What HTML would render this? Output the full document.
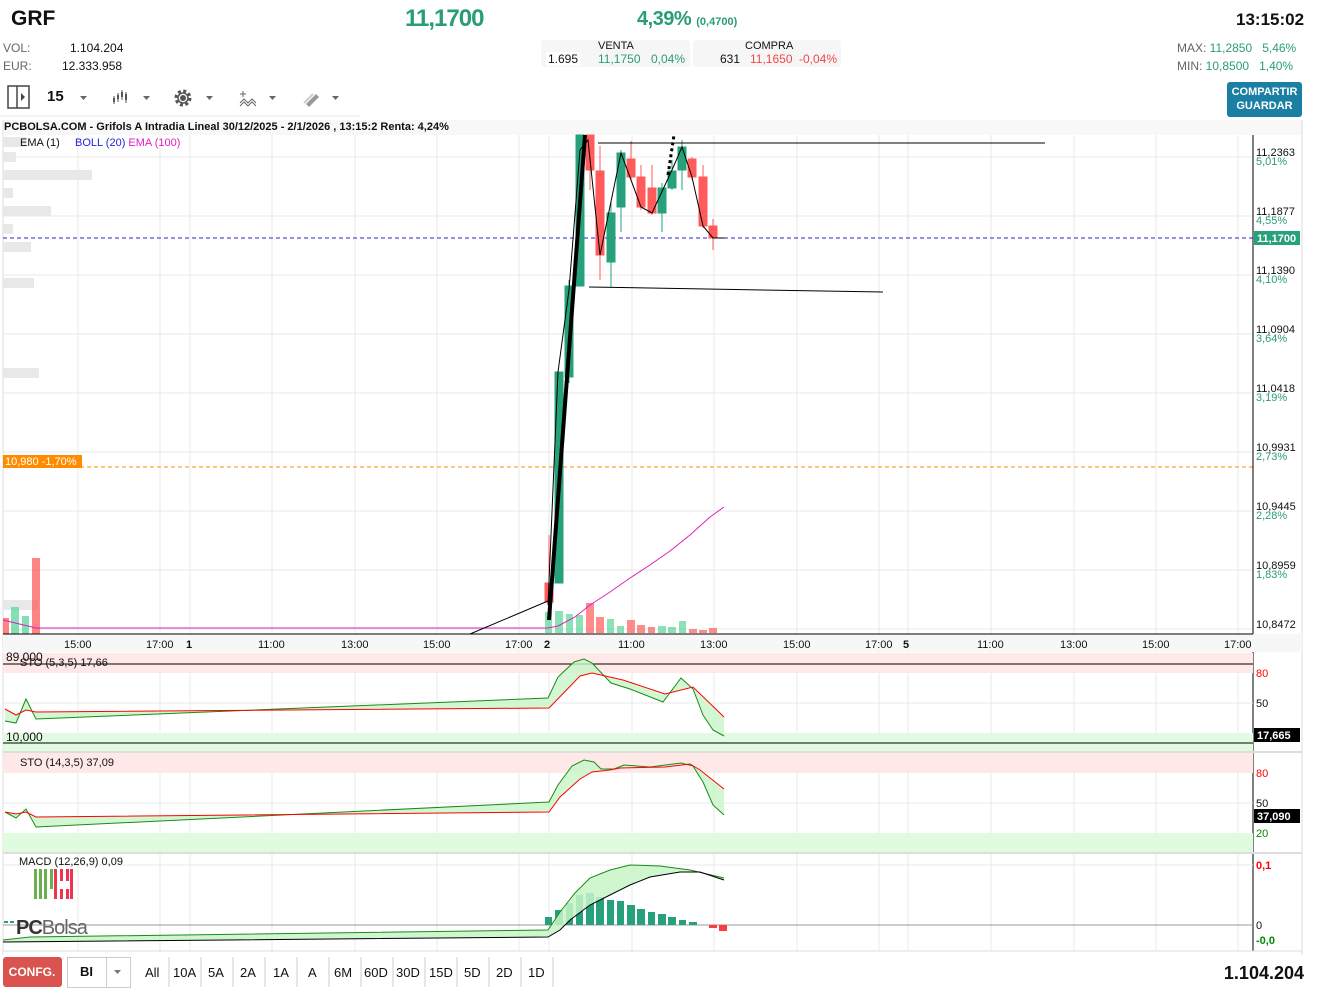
<!DOCTYPE html>
<html><head><meta charset="utf-8"><style>
*{margin:0;padding:0;box-sizing:border-box}
body{width:1317px;height:993px;background:#fff;font-family:"Liberation Sans",sans-serif;position:relative;overflow:hidden;color:#111}
.a{position:absolute;white-space:nowrap}
.g{color:#2a9d74}.r{color:#f04848}.gr{color:#666}
</style></head><body>
<div class="a" style="left:4px;top:120px;width:1298px;height:15px;background:#f8f8f8"></div>
<svg class="a" style="left:0;top:0" width="1317" height="993" font-family="Liberation Sans" font-size="11">
<!-- toolbar icons -->
<g stroke="#444" fill="none" stroke-width="1.5"><rect x="8" y="86" width="21" height="22"/><line x1="17" y1="86" x2="17" y2="108"/></g>
<path d="M21 93 L25 97 L21 101Z" fill="#444"/>
<g fill="#666"><path d="M80 96h7l-3.5 4z M143 96h7l-3.5 4z M206 96h7l-3.5 4z M269 96h7l-3.5 4z M332 96h7l-3.5 4z"/></g>
<g stroke="#555" stroke-width="1"><line x1="114" y1="96" x2="114" y2="104"/><line x1="118" y1="93" x2="118" y2="102"/><line x1="122" y1="90" x2="122" y2="100"/><line x1="126" y1="92" x2="126" y2="103"/></g>
<g fill="#555"><rect x="113" y="98" width="2" height="4"/><rect x="117" y="95" width="2" height="4"/><rect x="121" y="92" width="2" height="5"/><rect x="125" y="94" width="2" height="6"/></g>
<circle cx="183" cy="98" r="7" fill="none" stroke="#555" stroke-width="3" stroke-dasharray="3 2.5"/><circle cx="183" cy="98" r="5" fill="none" stroke="#555" stroke-width="1.5"/><circle cx="183" cy="98" r="3" fill="#555"/>
<path d="M240 94h6M243 91v6M240 103l4-4 4 4 4-4 4 4M240 106l4-4 4 4 4-4 4 4" stroke="#666" fill="none" stroke-width="1"/>
<path d="M306 104l10-10 3 3-10 10z" fill="#999"/><path d="M304 103l9-9" stroke="#ccc" stroke-width="2"/>
<line x1="0" y1="116" x2="360" y2="116" stroke="#e6e6e6"/>
<line x1="1302" y1="120" x2="1302" y2="955" stroke="#ddd"/>
<line x1="3" y1="120" x2="3" y2="955" stroke="#ddd"/>
<g stroke="#e8e8e8">
<line x1="3" y1="157" x2="1253" y2="157"/><line x1="3" y1="216" x2="1253" y2="216"/><line x1="3" y1="275" x2="1253" y2="275"/><line x1="3" y1="334" x2="1253" y2="334"/><line x1="3" y1="393" x2="1253" y2="393"/><line x1="3" y1="452" x2="1253" y2="452"/><line x1="3" y1="511" x2="1253" y2="511"/><line x1="3" y1="570" x2="1253" y2="570"/><line x1="3" y1="629" x2="1253" y2="629"/>
<path d="M78 135V951M160 135V951M190 135V951M272 135V951M355 135V951M437 135V951M519 135V951M549 135V951M632 135V951M714 135V951M797 135V951M879 135V951M908 135V951M991 135V951M1074 135V951M1156 135V951M1238 135V951"/>
</g>
<g fill="#e8e8e8"><rect x="3" y="137" width="23" height="10"/><rect x="3" y="152" width="13" height="10"/><rect x="3" y="170" width="89" height="10"/><rect x="3" y="188" width="10" height="10"/><rect x="3" y="206" width="48" height="10"/><rect x="3" y="224" width="10" height="10"/><rect x="3" y="242" width="28" height="10"/><rect x="3" y="278" width="31" height="10"/><rect x="3" y="368" width="36" height="10"/><rect x="3" y="600" width="35" height="10"/></g>
<g opacity="0.75"><rect x="3" y="618" width="6" height="16" fill="#ff5b5b"/><rect x="11" y="607" width="8" height="27" fill="#5cd69a"/><rect x="22" y="616" width="7" height="18" fill="#5cd69a"/><rect x="32" y="558" width="8" height="76" fill="#ff5b5b"/></g>
<g opacity="0.7">
<rect x="545" y="612" width="7" height="21" fill="#5cd69a"/><rect x="555" y="611" width="8" height="22" fill="#5cd69a"/><rect x="566" y="614" width="7" height="19" fill="#5cd69a"/><rect x="576" y="615" width="7" height="18" fill="#5cd69a"/><rect x="586" y="603" width="8" height="30" fill="#ff5b5b"/><rect x="596" y="617" width="8" height="16" fill="#ff5b5b"/><rect x="607" y="619" width="7" height="14" fill="#5cd69a"/><rect x="617" y="626" width="7" height="7" fill="#5cd69a"/><rect x="627" y="620" width="8" height="13" fill="#ff5b5b"/><rect x="637" y="625" width="8" height="8" fill="#ff5b5b"/><rect x="648" y="627" width="7" height="6" fill="#ff5b5b"/><rect x="658" y="626" width="8" height="7" fill="#5cd69a"/><rect x="668" y="627" width="8" height="6" fill="#5cd69a"/><rect x="679" y="621" width="7" height="12" fill="#5cd69a"/><rect x="689" y="629" width="8" height="4" fill="#ff5b5b"/><rect x="699" y="630" width="8" height="3" fill="#ff5b5b"/><rect x="709" y="628" width="8" height="5" fill="#ff5b5b"/>
</g>
<line x1="3" y1="238" x2="1253" y2="238" stroke="#2222dd" stroke-dasharray="4 3"/>
<line x1="3" y1="467" x2="1253" y2="467" stroke="#ff8c00" stroke-dasharray="4 3"/>
<rect x="3" y="455" width="79" height="13" fill="#ff8c00"/><text x="5" y="465" fill="#fff">10,980  -1,70%</text>
<path d="M3 620 L36 628 L548 628 L558 626 L575 617 L590 605 L610 592 L630 578 L650 565 L670 551 L690 535 L710 517 L724 507" stroke="#e020c0" fill="none"/>
<g stroke-width="1">
<g stroke="#ff5b5b" fill="#ff5b5b"><line x1="549" y1="535" x2="549" y2="605"/><rect x="545" y="583" width="8" height="19"/>
<line x1="590" y1="135" x2="590" y2="190"/><rect x="586" y="135" width="8" height="35"/>
<line x1="600" y1="146" x2="600" y2="280"/><rect x="596" y="171" width="8" height="84"/>
<line x1="631" y1="141" x2="631" y2="180"/><rect x="627" y="159" width="8" height="18"/>
<line x1="641" y1="165" x2="641" y2="210"/><rect x="637" y="177" width="8" height="30"/>
<line x1="652" y1="165" x2="652" y2="215"/><rect x="648" y="188" width="8" height="25"/>
<line x1="692" y1="157" x2="692" y2="180"/><rect x="688" y="159" width="8" height="18"/>
<line x1="703" y1="165" x2="703" y2="228"/><rect x="699" y="177" width="8" height="49"/>
<line x1="713" y1="219" x2="713" y2="250"/><rect x="709" y="226" width="8" height="12"/></g>
<g stroke="#26a17b" fill="#26a17b"><rect x="555" y="372" width="8" height="211"/>
<line x1="569" y1="280" x2="569" y2="383"/><rect x="565" y="286" width="8" height="91"/>
<rect x="576" y="135" width="8" height="151"/>
<line x1="611" y1="202" x2="611" y2="287"/><rect x="607" y="213" width="8" height="49"/>
<line x1="621" y1="150" x2="621" y2="232"/><rect x="617" y="153" width="8" height="54"/>
<line x1="662" y1="183" x2="662" y2="232"/><rect x="658" y="188" width="8" height="25"/>
<line x1="672" y1="160" x2="672" y2="190"/><rect x="668" y="171" width="8" height="17"/>
<line x1="682" y1="140" x2="682" y2="190"/><rect x="678" y="147" width="8" height="23"/></g>
</g>
<path d="M470 634 L548 601" stroke="#000" fill="none"/>
<path d="M549 620 L585 135" stroke="#000" stroke-width="4" fill="none"/>
<path d="M548 605 L558 372 L569 290 L580 150 L588 140 L600 255 L621 153 L641 207 L652 213 L672 170 L682 147 L692 177 L703 226 L713 238 L725 238" stroke="#000" fill="none"/>
<line x1="598" y1="143" x2="1045" y2="143" stroke="#000"/>
<line x1="589" y1="287" x2="883" y2="292" stroke="#000"/>
<path d="M668 175 L674 135" stroke="#000" stroke-width="3" stroke-dasharray="3 3"/>
<line x1="1253" y1="135" x2="1253" y2="951" stroke="#000"/>
<g fill="#111"><text x="1256" y="156">11,2363</text><text x="1256" y="215">11,1877</text><text x="1256" y="274">11,1390</text><text x="1256" y="333">11,0904</text><text x="1256" y="392">11,0418</text><text x="1256" y="451">10,9931</text><text x="1256" y="510">10,9445</text><text x="1256" y="569">10,8959</text><text x="1256" y="628">10,8472</text></g>
<g fill="#2a9d74"><text x="1256" y="165">5,01%</text><text x="1256" y="224">4,55%</text><text x="1256" y="283">4,10%</text><text x="1256" y="342">3,64%</text><text x="1256" y="401">3,19%</text><text x="1256" y="460">2,73%</text><text x="1256" y="519">2,28%</text><text x="1256" y="578">1,83%</text></g>
<rect x="1254" y="231" width="46" height="14" fill="#26a17b"/><text x="1257" y="242" fill="#fff" font-weight="bold">11,1700</text>
<rect x="3" y="634" width="1299" height="18" fill="#f7f7f7"/>
<line x1="3" y1="634" x2="1253" y2="634" stroke="#000"/>
<g fill="#111"><text x="64" y="648">15:00</text><text x="146" y="648">17:00</text><text x="186" y="648" font-weight="bold">1</text><text x="258" y="648">11:00</text><text x="341" y="648">13:00</text><text x="423" y="648">15:00</text><text x="505" y="648">17:00</text><text x="544" y="648" font-weight="bold">2</text><text x="618" y="648">11:00</text><text x="700" y="648">13:00</text><text x="783" y="648">15:00</text><text x="865" y="648">17:00</text><text x="903" y="648" font-weight="bold">5</text><text x="977" y="648">11:00</text><text x="1060" y="648">13:00</text><text x="1142" y="648">15:00</text><text x="1224" y="648">17:00</text></g>
<rect x="3" y="653" width="1250" height="20" fill="#ffe8e8"/><rect x="3" y="733" width="1250" height="18" fill="#e0fbe0"/>
<line x1="3" y1="703" x2="1253" y2="703" stroke="#e8e8e8"/>
<line x1="3" y1="664" x2="1253" y2="664" stroke="#000"/><line x1="3" y1="743" x2="1253" y2="743" stroke="#000"/>
<line x1="3" y1="752" x2="1302" y2="752" stroke="#ddd" stroke-width="2"/>
<polygon points="5,721 16,723 26,699 36,719 548,698 558,677 574,662 584,659 592,663 611,683 630,689 663,702 681,678 693,689 703,715 713,730 724,736 724,717 693,687 665,694 623,680 592,673 580,676 549,708 36,712 26,710 16,715 5,709" fill="#c8f5c8" opacity="0.8"/>
<polyline points="5,721 16,723 26,699 36,719 548,698 558,677 574,662 584,659 592,663 611,683 630,689 663,702 681,678 693,689 703,715 713,730 724,736" fill="none" stroke="#1a8a1a"/>
<polyline points="5,709 16,715 26,710 36,712 549,708 580,676 592,673 623,680 665,694 693,687 724,717" fill="none" stroke="#f00"/>
<text x="6" y="661" fill="#111" font-size="12">89,000</text>
<text x="20" y="666" fill="#111">STO (5,3,5)   17,66</text>
<text x="6" y="741" fill="#111" font-size="12">10,000</text>
<text x="1256" y="677" fill="#f00">80</text><text x="1256" y="707" fill="#111">50</text>
<rect x="1254" y="728" width="46" height="14" fill="#000"/><text x="1257" y="739" fill="#fff" font-weight="bold">17,665</text>
<rect x="3" y="753" width="1250" height="20" fill="#ffe8e8"/><rect x="3" y="833" width="1250" height="19" fill="#e0fbe0"/>
<line x1="3" y1="803" x2="1253" y2="803" stroke="#e8e8e8"/>
<line x1="3" y1="853" x2="1302" y2="853" stroke="#ddd" stroke-width="2"/>
<polygon points="5,812 16,818 26,809 36,827 549,802 558,785 572,766 584,760 594,762 601,769 614,769 624,765 650,767 681,763 693,766 703,782 713,805 724,815 724,789 700,770 690,764 665,767 620,768 610,770 592,772 580,779 560,797 549,812 36,817 26,812 16,814 5,812" fill="#c8f5c8" opacity="0.8"/>
<polyline points="5,812 16,818 26,809 36,827 549,802 558,785 572,766 584,760 594,762 601,769 614,769 624,765 650,767 681,763 693,766 703,782 713,805 724,815" fill="none" stroke="#1a8a1a"/>
<polyline points="5,812 16,814 26,812 36,817 549,812 560,797 580,779 592,772 610,770 620,768 665,767 690,764 700,770 724,789" fill="none" stroke="#f00"/>
<text x="20" y="766" fill="#111">STO (14,3,5)   37,09</text>
<text x="1256" y="777" fill="#f00">80</text><text x="1256" y="807" fill="#111">50</text><text x="1256" y="837" fill="#080">20</text>
<rect x="1254" y="809" width="46" height="14" fill="#000"/><text x="1257" y="820" fill="#fff" font-weight="bold">37,090</text>
<line x1="3" y1="925" x2="1253" y2="925" stroke="#999"/>
<line x1="3" y1="865" x2="1253" y2="865" stroke="#e8e8e8"/>
<g fill="#26a17b"><rect x="545" y="917" width="7" height="8"/><rect x="555" y="910" width="8" height="15"/><rect x="566" y="903" width="7" height="22"/><rect x="576" y="895" width="7" height="30"/><rect x="586" y="893" width="8" height="32"/><rect x="596" y="897" width="8" height="28"/><rect x="607" y="900" width="7" height="25"/><rect x="617" y="901" width="7" height="24"/><rect x="627" y="905" width="8" height="20"/><rect x="637" y="909" width="8" height="16"/><rect x="648" y="912" width="7" height="13"/><rect x="658" y="914" width="8" height="11"/><rect x="668" y="917" width="8" height="8"/><rect x="679" y="920" width="7" height="5"/><rect x="689" y="922" width="8" height="3"/></g>
<g fill="#ff3b3b"><rect x="709" y="925" width="8" height="3"/><rect x="719" y="925" width="8" height="6"/></g>
<polygon points="3,940 30,937 548,930 560,912 575,893 590,878 610,870 630,865 660,866 690,870 724,878 724,880 700,872 680,872 650,877 630,885 610,895 590,905 570,920 560,930 548,937 3,942" fill="#c8f5c8" opacity="0.85"/>
<polyline points="3,940 30,937 548,930 560,912 575,893 590,878 610,870 630,865 660,866 690,870 724,878" fill="none" stroke="#1a8a1a"/>
<polyline points="3,942 548,937 560,930 570,920 590,905 610,895 630,885 650,877 680,872 700,872 724,880" fill="none" stroke="#000"/>
<text x="19" y="865" fill="#111">MACD (12,26,9)   0,09</text>
<text x="1256" y="869" fill="#f00" font-weight="bold">0,1</text><text x="1256" y="929" fill="#111">0</text><text x="1256" y="944" fill="#080" font-weight="bold">-0,0</text>
<g fill="#6ab04c"><rect x="34" y="869" width="3" height="30"/><rect x="39" y="869" width="3" height="30"/><rect x="44" y="869" width="3" height="30"/><rect x="50" y="869" width="3" height="20"/></g>
<g fill="#ee3355"><rect x="54" y="869" width="3" height="30"/><rect x="60" y="869" width="3" height="12"/><rect x="60" y="889" width="3" height="10"/><rect x="66" y="869" width="3" height="12"/><rect x="66" y="889" width="3" height="10"/><rect x="70" y="869" width="3" height="30"/></g>
<path d="M4 922h4M10 922h4" stroke="#2a9d74" stroke-width="2"/>
<text x="16" y="934" fill="#333" font-size="20" letter-spacing="-1"><tspan font-weight="bold">PC</tspan><tspan fill="#666">Bolsa</tspan></text>
<line x1="3" y1="951" x2="1302" y2="951" stroke="#ddd"/>
<rect x="3" y="957" width="59" height="30" rx="3" fill="#d9534f"/>
<text x="32" y="976" fill="#fff" font-weight="bold" font-size="12" text-anchor="middle">CONFG.</text>
<rect x="67.5" y="957.5" width="63" height="30" fill="#fff" stroke="#ccc"/><line x1="106.5" y1="958" x2="106.5" y2="987" stroke="#ccc"/>
<text x="80" y="976" font-weight="bold" font-size="13" fill="#111">BI</text><path d="M114 970h7l-3.5 4z" fill="#777"/>
<g font-size="13" fill="#111"><text x="145" y="977">All</text><text x="173" y="977">10A</text><text x="208" y="977">5A</text><text x="240" y="977">2A</text><text x="273" y="977">1A</text><text x="308" y="977">A</text><text x="334" y="977">6M</text><text x="364" y="977">60D</text><text x="396" y="977">30D</text><text x="429" y="977">15D</text><text x="464" y="977">5D</text><text x="496" y="977">2D</text><text x="528" y="977">1D</text></g>
<g stroke="#ccc"><path d="M169 957v30M201 957v30M233 957v30M265 957v30M297 957v30M329 957v30M361 957v30M393 957v30M425 957v30M457 957v30M489 957v30M521 957v30M553 957v30"/></g>
<text x="1304" y="979" font-size="18" font-weight="bold" text-anchor="end" fill="#111">1.104.204</text>
</svg>
<div class="a" style="left:11px;top:7px;font-size:21px;font-weight:bold">GRF</div>
<div class="a g" style="left:405px;top:5px;font-size:24px;font-weight:bold;letter-spacing:-1px">11,1700</div>
<div class="a g" style="left:637px;top:8px;font-size:20px;font-weight:bold;letter-spacing:-0.5px">4,39% <span style="font-size:11px;letter-spacing:0">(0,4700)</span></div>
<div class="a" style="left:1236px;top:10px;font-size:17px;font-weight:bold">13:15:02</div>
<div class="a gr" style="left:3px;top:41px;font-size:12px">VOL:</div>
<div class="a" style="left:70px;top:41px;font-size:12px">1.104.204</div>
<div class="a gr" style="left:3px;top:59px;font-size:12px">EUR:</div>
<div class="a" style="left:62px;top:59px;font-size:12px">12.333.958</div>
<div class="a" style="left:541px;top:40px;width:149px;height:27px;background:#f6f6f6;border-radius:3px"></div>
<div class="a" style="left:693px;top:40px;width:148px;height:27px;background:#f6f6f6;border-radius:3px"></div>
<div class="a" style="left:598px;top:40px;font-size:11px">VENTA</div>
<div class="a" style="left:745px;top:40px;font-size:11px">COMPRA</div>
<div class="a" style="left:546px;top:52px;font-size:12px;background:#fff;padding:0 2px">1.695</div>
<div class="a g" style="left:598px;top:52px;font-size:12px">11,1750</div>
<div class="a g" style="left:651px;top:52px;font-size:12px">0,04%</div>
<div class="a" style="left:720px;top:52px;font-size:12px">631</div>
<div class="a r" style="left:750px;top:52px;font-size:12px">11,1650</div>
<div class="a r" style="left:799px;top:52px;font-size:12px">-0,04%</div>
<div class="a gr" style="left:1177px;top:41px;font-size:12px">MAX: <span class="g">11,2850</span>&nbsp;&nbsp; <span class="g">5,46%</span></div>
<div class="a gr" style="left:1177px;top:59px;font-size:12px">MIN: <span class="g">10,8500</span>&nbsp;&nbsp; <span class="g">1,40%</span></div>
<div class="a" style="left:1227px;top:82px;width:75px;height:35px;background:#1a7fa3;border-radius:3px;color:#fff;font-size:11px;font-weight:bold;text-align:center;line-height:14px;padding-top:3px">COMPARTIR<br>GUARDAR</div>
<div class="a" style="left:47px;top:88px;font-size:15px;font-weight:bold">15</div>
<div class="a" style="left:4px;top:121px;font-size:11px;font-weight:bold">PCBOLSA.COM - Grifols A Intradia Lineal 30/12/2025 - 2/1/2026 , 13:15:2 Renta: 4,24%</div>
<div class="a" style="left:20px;top:137px;font-size:11px">EMA (1) &nbsp;&nbsp;&nbsp;&nbsp;<span style="color:#2222dd">BOLL (20)</span> <span style="color:#e020c0">EMA (100)</span></div>
</body></html>
